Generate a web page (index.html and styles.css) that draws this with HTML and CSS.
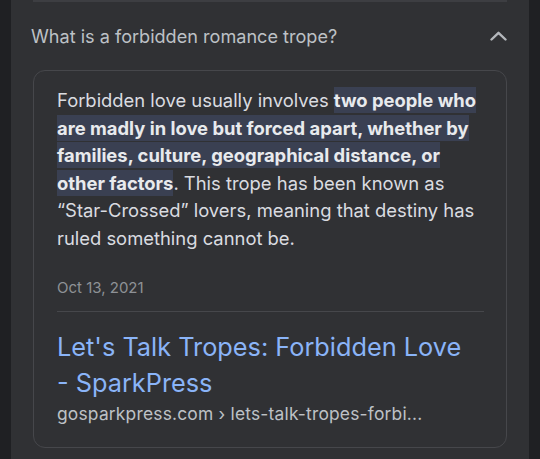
FILE: index.html
```html
<!DOCTYPE html>
<html>
<head>
<meta charset="utf-8">
<link rel="stylesheet" href="styles.css">
</head>
<body>
<div class="page">
  <div class="panel">
    <div class="topline"></div>
    <div class="question">
      <span class="qtext">What is a forbidden romance trope?</span>
      <svg class="chev" width="17" height="10" viewBox="0 0 17 10"><path d="M1.5 8.5 L8.5 1.8 L15.5 8.5" fill="none" stroke="#b4b7bc" stroke-width="2.4" stroke-linecap="round" stroke-linejoin="round"/></svg>
    </div>
    <div class="card">
      <p class="answer">Forbidden love usually involves <b class="hl">two people who are madly in love but forced apart, whether by families, culture, geographical distance, or other factors</b>. This trope has been known as “Star-Crossed” lovers, meaning that destiny has ruled something cannot be.</p>
      <div class="date">Oct 13, 2021</div>
      <div class="sep"></div>
      <a class="title">Let's Talk Tropes: Forbidden Love - SparkPress</a>
      <div class="url">gosparkpress.com › lets-talk-tropes-forbi...</div>
    </div>
  </div>
</div>
</body>
</html>
```
FILE: styles.css
```css
html, body {
  margin: 0;
  padding: 0;
  background: #1f2023;
  font-family: Inter, "Liberation Sans", Arial, sans-serif;
}
.page {
  width: 540px;
  height: 459px;
  overflow: hidden;
  padding: 0 11px;
  box-sizing: border-box;
}
.panel {
  background: #303134;
  height: 459px;
  padding: 0 22px;
}
.topline {
  height: 2px;
  background: #3d3e42;
}
.question {
  display: flex;
  align-items: center;
  justify-content: space-between;
  height: 68px;
}
.qtext {
  color: #bdc1c6;
  font-size: 18.1px;
  margin-left: -2px;
}
.chev {
  display: block;
}
.card {
  border: 1px solid #46474b;
  border-radius: 12px;
  padding: 16px 22px 22px 23px;
}
.answer {
  margin: 0;
  font-size: 18.4px;
  line-height: 27.5px;
  color: #dadce0;
}
.hl {
  background: #3a4052;
  color: #e8eaed;
  font-weight: 700;
  padding: 2px 0;
}
.date {
  margin-top: 26px;
  color: #8e9196;
  font-size: 15px;
  line-height: 20px;
}
.sep {
  height: 1px;
  background: #46474b;
  margin-top: 13px;
}
.title {
  display: block;
  color: #8ab4f8;
  font-size: 25.3px;
  line-height: 36px;
  margin-top: 17px;
  margin-right: 10px;
}
.url {
  color: #bdc1c6;
  font-size: 17.4px;
  letter-spacing: 0.2px;
  line-height: 22px;
  margin-top: 2px;
}
```
